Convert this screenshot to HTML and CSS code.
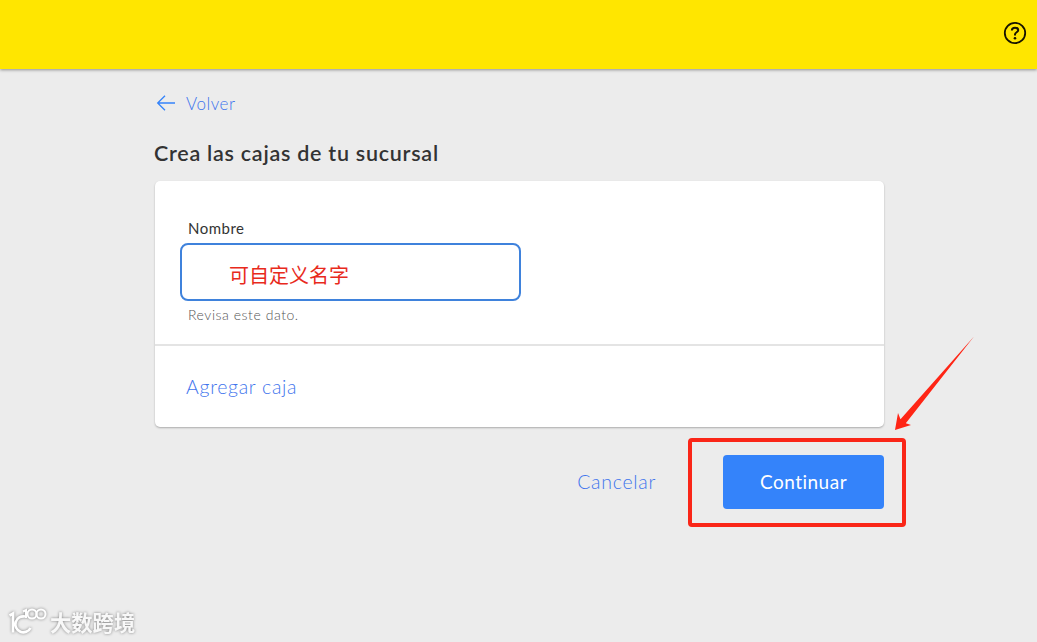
FILE: index.html
```html
<!DOCTYPE html>
<html lang="es">
<head>
<meta charset="utf-8">
<title>Crea las cajas de tu sucursal</title>
<link rel="stylesheet" href="styles.css">
</head>
<body>
<header class="topbar">
  <svg class="help" width="24" height="24" viewBox="0 0 24 24" fill="none" stroke="#171400" stroke-width="1.8">
    <circle cx="12" cy="12" r="10.2"/>
    <path d="M8.900 9.500V9.200C8.900 7.500 10.200 6.700 12 6.700S15.200 7.600 15.200 9.200C15.200 11.200 12 11.300 12 13.400V14.600" stroke-width="2"/>
    <circle cx="12" cy="17.300" r="1.300" fill="#171400" stroke="none"/>
  </svg>
</header>
<main class="content">
  <a class="back">
    <svg width="20" height="18" viewBox="0 0 20 18" fill="none" stroke="#3483fa" stroke-width="1.3"><path d="M19 9H2M9 1.7L1.7 9L9 16.3"/></svg>
    <span class="back-label">Volver</span>
  </a>
  <h1 class="title">Crea las cajas de tu sucursal</h1>
  <section class="card">
    <div class="field">
      <label class="label">Nombre</label>
      <div class="input"><span class="value">可自定义名字</span></div>
      <p class="hint">Revisa este dato.</p>
    </div>
    <div class="add"><a class="add-link">Agregar caja</a></div>
  </section>
  <div class="actions">
    <a class="cancel">Cancelar</a>
    <button class="continue"><span class="continue-label">Continuar</span></button>
  </div>
</main>
<div class="highlight"></div>
<svg class="arrow" width="100" height="110" viewBox="880 330 100 110"><path fill="#ff2515" d="M974 336.500L905.800 423.300L911 425L895 430L898 413L900.500 419.200Z"/></svg>
<div class="watermark">
  <svg class="watermark-logo" width="40" height="30" viewBox="0 0 40 30" fill="none" stroke="#fff" stroke-width="2.600">
    <path d="M1.500 9.500L5 7.500V26.500M17 10.500A8 8 0 1 0 22.500 22"/>
    <path d="M15 5.500L18 4V12" stroke-width="2"/>
    <circle cx="24" cy="8" r="4.500" stroke-width="2"/>
    <circle cx="33" cy="8" r="4.500" stroke-width="2"/>
  </svg>
  <span class="watermark-text">大数跨境</span>
</div>
</body>
</html>
```
FILE: styles.css
```css
* { box-sizing: border-box; }
body {
  margin: 0;
  height: 642px;
  overflow: hidden;
  background: #ececec;
  font-family: Lato, "Noto Sans CJK SC", sans-serif;
  color: #333;
}
.topbar {
  height: 69px;
  padding: 21px 10px 0 0;
  display: flex;
  justify-content: flex-end;
  background: #ffe600;
  box-shadow: 0 1px 3px rgba(0, 0, 0, .4);
}
.content { width: 730px; margin-left: 154px; padding-top: 24px; }
.back { display: flex; align-items: center; gap: 10px; height: 20px; padding-left: 2px; color: #3f75ed; }
.back-label { font-size: 17px; font-weight: 300; letter-spacing: .5px; }
.title { margin: 26px 0 0; height: 28px; line-height: 28px; font-size: 21.5px; font-weight: 600; letter-spacing: .74px; white-space: nowrap; }
.card {
  margin: 14px 0 0 1px;
  height: 246px;
  background: #fff;
  border-radius: 5px;
  box-shadow: 0 1px 2px rgba(0, 0, 0, .28);
}
.field { height: 165px; padding: 37px 0 0 25px; border-bottom: 2px solid #e4e4e4; }
.label { display: block; height: 25px; line-height: 20px; padding-left: 8px; font-size: 15px; letter-spacing: .5px; }
.input { width: 341px; height: 58px; padding: 0 0 0 47px; display: flex; align-items: center; border: 2px solid #3f82dc; border-radius: 8px; }
.value { padding-top: 6px; font: 20px/28px "Noto Sans CJK SC", sans-serif; color: #e82a1c; }
.hint { margin: 4px 0 0; padding-left: 8px; line-height: 20px; font-size: 14px; font-weight: 300; letter-spacing: .55px; color: #555; }
.add { height: 81px; padding-left: 31px; display: flex; align-items: center; }
.add-link, .cancel { font-size: 19.5px; font-weight: 300; letter-spacing: .7px; color: #3f75ed; }
.cancel { position: relative; top: -1px; }
.actions { display: flex; justify-content: flex-end; align-items: center; gap: 67px; margin-top: 28px; }
.continue { width: 161px; height: 54px; padding: 0 0 2px; border: 0; border-radius: 4px; background: #3483fa; color: #fff; font: 400 19px Lato, sans-serif; letter-spacing: .5px; }
.highlight { position: absolute; left: 688px; top: 438px; width: 218px; height: 89px; border: 4px solid #fa2618; border-radius: 4px; }
.arrow { position: absolute; left: 880px; top: 330px; }
.watermark { position: absolute; left: 8px; top: 605px; display: flex; gap: 2px; filter: drop-shadow(0 0 1.5px rgba(0, 0, 0, .45)); }
.watermark-logo { margin-top: 1px; }
.watermark-text { font: 700 21.300px/34px "Noto Sans CJK SC", sans-serif; color: #f8f8f8; }
```
